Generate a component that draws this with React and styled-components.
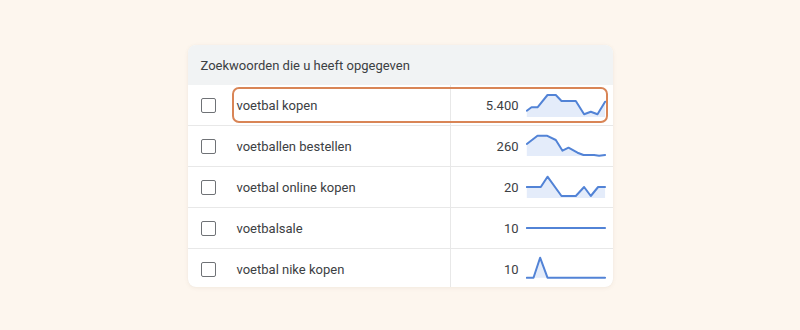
import styled, { createGlobalStyle } from 'styled-components';

const GlobalStyle = createGlobalStyle`
  html, body {
    margin: 0;
    padding: 0;
    background: #fdf6ee;
  }
  body {
    font-family: Roboto, 'Noto Sans', sans-serif;
  }
`;

const Page = styled.div`
  width: 800px;
  height: 330px;
  display: flex;
  justify-content: center;
  align-items: flex-start;
  padding-top: 45px;
  box-sizing: border-box;
`;

const Card = styled.div`
  width: 425px;
  background: #ffffff;
  border-radius: 8px;
  overflow: hidden;
  box-shadow: 0 1px 4px rgba(120, 90, 60, 0.08), 0 0 1px rgba(0, 0, 0, 0.06);
`;

const Header = styled.div`
  height: 40px;
  display: flex;
  align-items: center;
  padding-left: 13px;
  background: #f1f3f4;
  font-size: 13px;
  color: #3c4043;
`;

const Row = styled.div`
  position: relative;
  display: grid;
  grid-template-columns: 49px 213px 1fr;
  height: 40px;
  align-items: stretch;

  &:not(:last-child) {
    border-bottom: 1px solid #e8e8e8;
  }

  &:last-child {
    height: 38px;
  }
`;

const CheckCell = styled.div`
  display: flex;
  align-items: center;
  padding-left: 13px;
`;

const Checkbox = styled.span`
  width: 13px;
  height: 13px;
  border: 1.5px solid #6f7276;
  border-radius: 2px;
`;

const Keyword = styled.div`
  display: flex;
  align-items: center;
  font-size: 13px;
  color: #3c4043;
`;

const StatsCell = styled.div`
  display: flex;
  align-items: center;
  justify-content: flex-end;
  gap: 7px;
  padding-right: 7px;
  border-left: 1px solid #e8e8e8;
`;

const Volume = styled.span`
  font-size: 13px;
  color: #3c4043;
`;

const Spark = styled.svg`
  display: block;
  width: 80px;
  height: 40px;
  align-self: flex-start;
`;

const Highlight = styled.div`
  position: absolute;
  top: 2px;
  bottom: 2px;
  left: 44px;
  right: 5px;
  border: 2px solid #d98556;
  border-radius: 7px;
  pointer-events: none;
`;

const keywords = [
  {
    name: 'voetbal kopen',
    volume: '5.400',
    highlighted: true,
    base: 32,
    points: [
      [0, 25.7], [4.7, 22.3], [10.7, 22.3], [20.7, 10], [29, 10], [34.7, 16],
      [49, 16], [57.3, 29.3], [64, 26.7], [70.7, 29.3], [78.3, 16.7],
    ],
  },
  {
    name: 'voetballen bestellen',
    volume: '260',
    base: 30,
    points: [
      [0, 18], [10.7, 9.7], [20, 9.7], [29, 14], [35.7, 24.7], [41.7, 21.7],
      [50.7, 26.7], [56.7, 29], [67.3, 29], [72.3, 29.7], [78.3, 29],
    ],
  },
  {
    name: 'voetbal online kopen',
    volume: '20',
    base: 31,
    points: [
      [0, 20], [14, 20], [20.7, 9.7], [34.7, 29], [49, 29], [57.3, 20],
      [64, 29], [71.3, 20], [78.3, 20],
    ],
  },
  {
    name: 'voetbalsale',
    volume: '10',
    base: 20,
    points: [[0, 20], [78.3, 20]],
  },
  {
    name: 'voetbal nike kopen',
    volume: '10',
    base: 28.7,
    points: [[0, 28.7], [6.7, 28.7], [13.3, 8.7], [20.7, 28.7], [78.3, 28.7]],
  },
];

function Sparkline({ points, base }) {
  const line = points.map(([x, y]) => `${x + 0.8},${y}`).join(' ');
  const first = points[0];
  const last = points[points.length - 1];
  const area = `${first[0] + 0.8},${base} ${line} ${last[0] + 0.8},${base}`;

  return (
    <Spark viewBox="0 0 80 40">
      <polygon points={area} fill="#e4ecfa" />
      <polyline
        points={line}
        fill="none"
        stroke="#5283d6"
        strokeWidth="2"
        strokeLinejoin="round"
        strokeLinecap="round"
      />
    </Spark>
  );
}

export default function App() {
  return (
    <>
      <GlobalStyle />
      <Page>
        <Card>
          <Header>Zoekwoorden die u heeft opgegeven</Header>
          {keywords.map((kw) => (
            <Row key={kw.name}>
              <CheckCell>
                <Checkbox />
              </CheckCell>
              <Keyword>{kw.name}</Keyword>
              <StatsCell>
                <Volume>{kw.volume}</Volume>
                <Sparkline points={kw.points} base={kw.base} />
              </StatsCell>
              {kw.highlighted && <Highlight />}
            </Row>
          ))}
        </Card>
      </Page>
    </>
  );
}
